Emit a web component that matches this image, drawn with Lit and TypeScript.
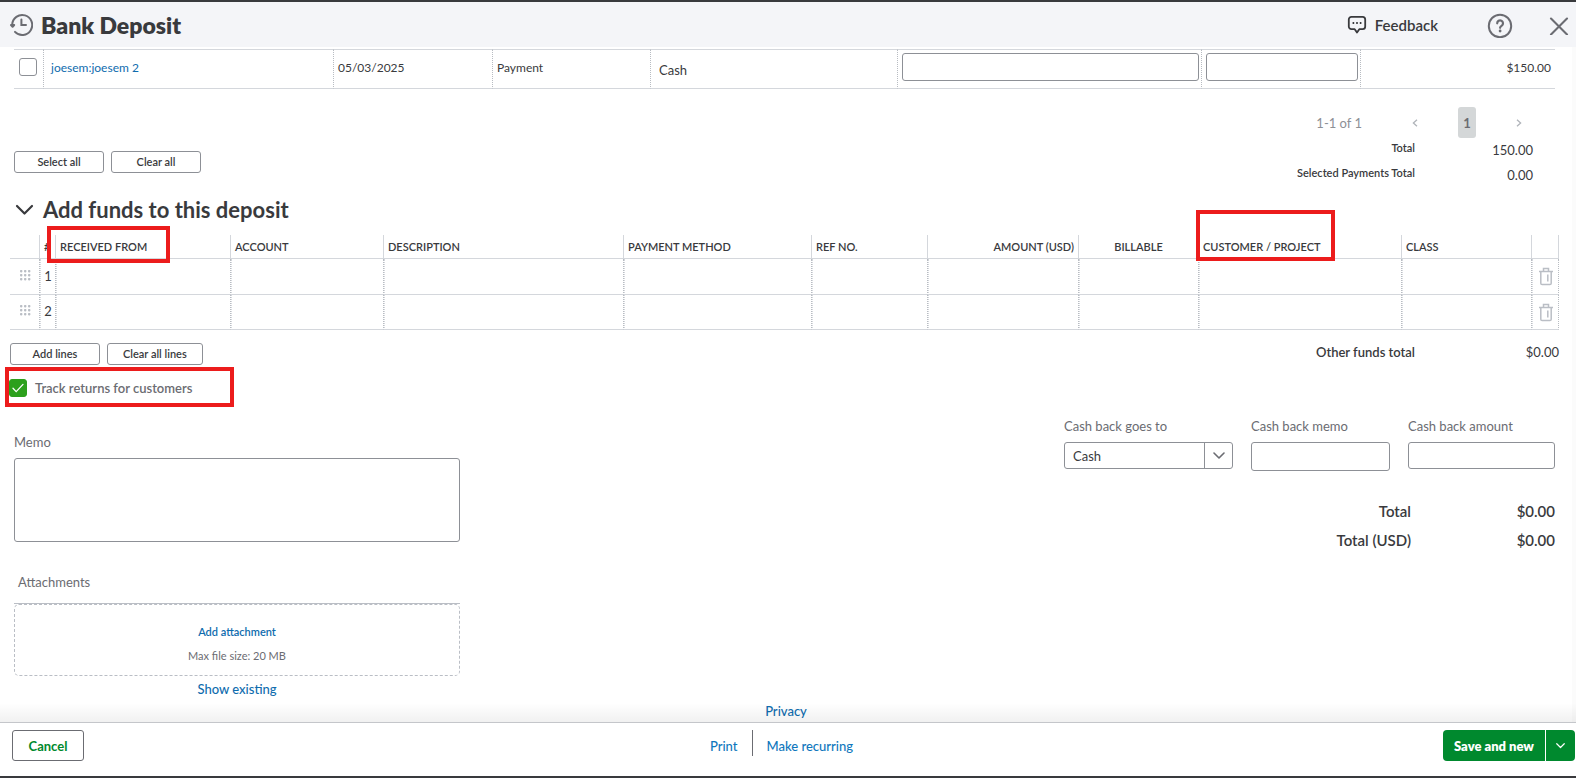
import { LitElement, html, css, svg } from "lit";
import { customElement } from "lit/decorators.js";

const chevronDown = svg`<path d="M1 1l5 5 5-5" fill="none" stroke="currentColor" stroke-width="1.6" stroke-linecap="round" stroke-linejoin="round"/>`;

@customElement("app-root")
export class AppRoot extends LitElement {
  static styles = css`
    :host {
      display: block;
      font-family: Lato, "Open Sans", sans-serif;
      font-size: 13px;
      line-height: 16px;
      color: #393a3d;
      --line: #d4d7dc;
      --edge: #8d9096;
      --muted: #6b6c72;
      --link: #0f6cae;
      --green: #00892e;
    }
    * { box-sizing: border-box; }
    button, input, select, textarea { font: inherit; color: inherit; margin: 0; }
    button { cursor: pointer; padding: 0; background: none; border: 0; }
    a { color: var(--link); text-decoration: none; font-weight: 500; }
    svg { display: block; }
    .page {
      display: flex;
      flex-direction: column;
      min-height: 100vh;
      background: #fff;
      border-top: 2px solid #393a3d;
      border-bottom: 2px solid #393a3d;
    }
    .top {
      display: flex;
      align-items: center;
      height: 45px;
      padding: 0 7px 0 9px;
      background: #f4f5f8;
      color: var(--muted);
    }
    .top h1 {
      flex: 1;
      margin: 0 0 0 8px;
      font-size: 23px;
      line-height: 28px;
      font-weight: 800;
      color: #393a3d;
    }
    .feedback {
      display: flex;
      align-items: center;
      gap: 8px;
      margin-right: 49px;
      font-size: 15px;
      font-weight: 600;
      color: #393a3d;
    }
    .help { margin-right: 36px; }
    .body { flex: 1; display: flex; flex-direction: column; padding-top: 2px; border-right: 4px solid #fbfbfb; }
    table { width: 100%; table-layout: fixed; border-collapse: separate; border-spacing: 0; }
    th, td { padding: 0; text-align: left; }
    .payments { padding: 0 17px 0 14px; }
    .payments td {
      height: 40px;
      padding: 0 4px 2px;
      border-top: 1px solid var(--line);
      border-bottom: 1px solid var(--line);
      border-right: 1px dotted #b8bcc2;
      font-size: 12px;
    }
    .payments td:last-child { border-right: 0; text-align: right; }
    .payments .pick { padding: 0 0 4px 5px; }
    .payments .payer { padding-left: 7px; }
    .payments .method { padding: 2px 8px 0; font-size: 13px; }
    .payments .entry { padding-bottom: 4px; padding-right: 2px; }
    .payments .entry + .entry { padding-left: 4px; }
    .payer a { font-weight: 400; }
    .c-pick { width: 30px; }
    .c-date { width: 159px; }
    .c-type { width: 158px; }
    .c-method { width: 247px; }
    .c-memo { width: 304px; }
    .c-ref { width: 159px; }
    .c-amount { width: 194px; }
    .tick {
      appearance: none;
      display: block;
      width: 18px;
      height: 18px;
      border: 1px solid var(--edge);
      border-radius: 3px;
      background: #fff;
    }
    .box {
      display: block;
      width: 100%;
      height: 28px;
      padding: 0 8px;
      border: 1px solid var(--edge);
      border-radius: 3px;
      background: #fff;
    }
    .pager {
      display: flex;
      align-items: center;
      justify-content: flex-end;
      margin-top: 18px;
      padding-right: 50px;
      color: var(--edge);
    }
    .pager svg { color: #b0b4ba; }
    .prev { margin: 0 40px 0 50px; }
    .next { margin-left: 40px; }
    .current {
      width: 18px;
      height: 31px;
      border-radius: 3px;
      background: #d4d7d8;
      color: var(--muted);
      font-weight: 700;
    }
    .between { display: flex; justify-content: space-between; align-items: flex-start; }
    .summary { padding: 2px 39px 0 14px; }
    .summary .buttons { margin-top: 11px; }
    .buttons { display: flex; gap: 7px; }
    .small {
      min-width: 90px;
      height: 22px;
      padding: 0 15px;
      border: 1px solid var(--edge);
      border-radius: 3px;
      background: #fff;
      font-size: 11px;
      line-height: 16px;
      font-weight: 600;
    }
    dl { display: grid; margin: 0; }
    dt, dd { margin: 0; text-align: right; }
    .sums { grid-template-columns: auto 118px; row-gap: 9px; font-size: 11px; font-weight: 600; }
    .sums dd { padding-top: 2px; margin-bottom: -2px; font-size: 13px; font-weight: 400; }
    .section {
      display: flex;
      align-items: center;
      gap: 9px;
      margin-top: 15px;
      padding-left: 15px;
    }
    .section h2 { margin: 0; font-size: 22px; line-height: 28px; font-weight: 700; }
    .funds { margin-top: 11px; padding: 0 13px 0 10px; }
    .funds th {
      position: relative;
      height: 24px;
      padding: 0 4px;
      border-right: 1px solid var(--line);
      border-bottom: 1px solid var(--line);
      font-size: 11px;
      font-weight: 600;
    }
    .funds td {
      height: 36px;
      border-bottom: 1px solid var(--line);
      border-right: 1px dotted #b8bcc2;
      vertical-align: middle;
    }
    .funds tr:last-child td { height: 35px; }
    .funds td + td { border-left: 1px dotted #d4d7dc; }
    .funds .num { padding-bottom: 2px; text-align: center; }
    .funds .right { text-align: right; }
    .funds .center { text-align: center; }
    .f-grip { width: 30px; }
    .f-num { width: 16px; }
    .f-from { width: 175px; }
    .f-account { width: 153px; }
    .f-method { width: 188px; }
    .f-ref { width: 116px; }
    .f-amount { width: 151px; }
    .f-bill { width: 120px; }
    .f-cust { width: 203px; }
    .f-class { width: 130px; }
    .f-del { width: 27px; }
    .funds .grip { padding: 0 0 3px 10px; color: #babec5; }
    .trash { display: block; margin: 0 auto; color: #babec5; }
    .mark {
      position: absolute;
      z-index: 2;
      border: 4px solid #ec1c1c;
      pointer-events: none;
    }
    .mark-from { left: -9px; top: -9px; width: 123px; height: 37px; }
    .mark-cust { left: -3px; top: -25px; width: 139px; height: 51px; }
    .mark-track { left: -4px; top: -12px; width: 229px; height: 40px; }
    .below { padding: 13px 13px 0 10px; }
    .others { display: grid; grid-template-columns: auto 144px; padding-top: 1px; }
    .others dt { font-weight: 600; }
    .track {
      position: relative;
      display: flex;
      align-items: center;
      align-self: flex-start;
      gap: 8px;
      height: 18px;
      margin: 14px 0 0 9px;
      color: var(--muted);
      font-weight: 600;
    }
    .checked { display: grid; }
    .checked > * { grid-area: 1 / 1; place-self: center; }
    .checked .tick:checked { border-color: #2ca01c; background: #2ca01c; }
    .checked svg { pointer-events: none; color: #fff; }
    .details { padding: 21px 17px 0 14px; }
    .left { display: flex; flex-direction: column; width: 446px; margin-top: 16px; color: var(--muted); }
    .left textarea {
      display: block;
      height: 84px;
      margin: 8px 0 32px;
      padding: 8px;
      border: 1px solid var(--edge);
      border-radius: 3px;
      resize: none;
    }
    .attach-title { padding: 0 4px 13px; border-bottom: 1px solid #babec5; }
    .drop {
      display: flex;
      flex-direction: column;
      align-items: center;
      gap: 8px;
      height: 72px;
      padding-top: 19px;
      border: 1px dashed #babec5;
      border-radius: 5px;
      font-size: 11px;
    }
    .drop a { font-weight: 600; }
    .existing { align-self: center; margin-top: 5px; }
    .cashback { display: flex; align-items: flex-start; gap: 18px; color: var(--muted); }
    .field { display: grid; gap: 8px; }
    .field .box { height: 27px; color: #393a3d; }
    .field .tall { height: 29px; }
    .w-goes { width: 169px; }
    .w-memo { width: 139px; }
    .w-amount { width: 147px; }
    .combo { display: grid; }
    .combo > * { grid-area: 1 / 1; }
    .combo select { appearance: none; }
    .arrow {
      justify-self: end;
      display: grid;
      place-items: center;
      width: 29px;
      border-left: 1px solid var(--edge);
      pointer-events: none;
    }
    .grand { grid-template-columns: auto 144px; row-gap: 13px; margin-top: 32px; font-size: 15px; font-weight: 600; }
    .privacy { align-self: center; margin-top: 6px; }
    .foot {
      position: relative;
      display: grid;
      grid-template-columns: 1fr auto 1fr;
      align-items: start;
      height: 54px;
      padding: 7px 1px 0 12px;
      border-top: 1px solid #d0d2d6;
      background: #fff;
    }
    .foot::before {
      content: "";
      position: absolute;
      left: 0;
      right: 0;
      bottom: 100%;
      height: 20px;
      background: linear-gradient(rgba(0, 0, 0, 0), rgba(0, 0, 0, 0.06));
      pointer-events: none;
    }
    .cancel {
      justify-self: start;
      width: 72px;
      height: 31px;
      border: 1px solid var(--muted);
      border-radius: 3px;
      color: var(--green);
      font-weight: 700;
    }
    .links { display: flex; align-items: center; margin-right: 24px; }
    .links a { padding: 8px 14px 7px; color: #0f77bd; }
    .bar { width: 1px; height: 26px; margin-bottom: 5px; background: var(--muted); }
    .save { justify-self: end; display: flex; gap: 1px; color: #fff; }
    .save button { height: 31px; background: var(--green); font-weight: 800; }
    .save .main { width: 102px; border-radius: 4px 0 0 4px; }
    .save .more { display: grid; place-items: center; width: 29px; border-radius: 0 4px 4px 0; }
  `;

  private fundRow(n: number) {
    return html`<tr>
      <td class="grip">
        <svg width="11" height="11" viewBox="0 0 11 11" fill="currentColor">
          ${[0, 4, 8].map((y) => [0, 4, 8].map((x) => svg`<rect x=${x} y=${y} width="2.4" height="2.4" rx="0.8"/>`))}
        </svg>
      </td>
      <td class="num">${n}</td>
      ${Array.from({ length: 9 }, () => html`<td></td>`)}
      <td>
        <button class="trash" aria-label="Delete line ${n}">
          <svg width="16" height="19" viewBox="0 0 16 19" fill="none" stroke="currentColor" stroke-width="1.5">
            <path d="M1 4.5h14M5.5 4V1.5h5V4M2.8 5v11.2q0 1.3 1.3 1.3h7.8q1.3 0 1.3-1.3V5M9.8 7.5v7"/>
          </svg>
        </button>
      </td>
    </tr>`;
  }

  render() {
    return html`<div class="page">
      <header class="top">
        <svg width="24" height="24" viewBox="0 0 24 24" fill="none" stroke="currentColor" stroke-width="2" stroke-linecap="round">
          <path d="M3.2 11.6A10 10 0 1 1 6 18.9"/>
          <path d="M12.4 6.6v5.4h4.6"/>
          <path d="M2 12h3.2l-1.6 1.8z" fill="currentColor" stroke-linejoin="round"/>
        </svg>
        <h1>Bank Deposit</h1>
        <button class="feedback">
          <svg width="20" height="20" viewBox="0 0 20 20" fill="none" stroke="currentColor" stroke-width="1.8" stroke-linejoin="round">
            <path d="M4.4 1.8h11.2a2.6 2.6 0 0 1 2.6 2.6v7.2a2.6 2.6 0 0 1-2.6 2.6h-3.3L10 17.6l-2.3-3.4H4.4a2.6 2.6 0 0 1-2.6-2.6V4.4a2.6 2.6 0 0 1 2.6-2.6z"/>
            <path d="M5.6 8h1.6M9.2 8h1.6M12.8 8h1.6"/>
          </svg>
          Feedback
        </button>
        <button class="help" aria-label="Help">
          <svg width="26" height="26" viewBox="0 0 26 26" fill="none" stroke="currentColor" stroke-width="2" stroke-linecap="round">
            <circle cx="13" cy="14" r="11.2"/>
            <path d="M10.2 11.3a2.9 2.9 0 1 1 4.6 2.3c-1.1.7-1.7 1.1-1.7 2.2" stroke-width="2.2"/>
            <circle cx="13.1" cy="19" r=".7" fill="currentColor" stroke-width="1.4"/>
          </svg>
        </button>
        <button aria-label="Close">
          <svg width="20" height="20" viewBox="0 0 20 20" fill="none" stroke="currentColor" stroke-width="2.1" stroke-linecap="round">
            <path d="M2 3.5l16 16M18 3.5l-16 16"/>
          </svg>
        </button>
      </header>

      <main class="body">
        <div class="payments">
          <table>
            <colgroup>
              <col class="c-pick"><col><col class="c-date"><col class="c-type"><col class="c-method"><col class="c-memo"><col class="c-ref"><col class="c-amount">
            </colgroup>
            <tbody>
              <tr>
                <td class="pick"><input class="tick" type="checkbox" aria-label="Select payment"></td>
                <td class="payer"><a href="#">joesem:joesem 2</a></td>
                <td>05/03/2025</td>
                <td>Payment</td>
                <td class="method">Cash</td>
                <td class="entry"><input class="box" type="text" aria-label="Payment memo"></td>
                <td class="entry"><input class="box" type="text" aria-label="Payment reference"></td>
                <td>$150.00</td>
              </tr>
            </tbody>
          </table>
        </div>

        <nav class="pager" aria-label="Pages">
          <span>1-1 of 1</span>
          <button class="prev" aria-label="Previous page">
            <svg width="6" height="8" viewBox="0 0 6 8" fill="none" stroke="currentColor" stroke-width="1.3"><path d="M5 .8L1.4 4 5 7.2"/></svg>
          </button>
          <button class="current">1</button>
          <button class="next" aria-label="Next page">
            <svg width="6" height="8" viewBox="0 0 6 8" fill="none" stroke="currentColor" stroke-width="1.3"><path d="M1 .8L4.6 4 1 7.2"/></svg>
          </button>
        </nav>

        <div class="between summary">
          <div class="buttons">
            <button class="small">Select all</button>
            <button class="small">Clear all</button>
          </div>
          <dl class="sums">
            <dt>Total</dt><dd>150.00</dd>
            <dt>Selected Payments Total</dt><dd>0.00</dd>
          </dl>
        </div>

        <div class="section">
          <svg width="19" height="12" viewBox="0 0 19 12" fill="none" stroke="currentColor" stroke-width="2.2" stroke-linecap="round" stroke-linejoin="round"><path d="M2 2l7.5 7.5L17 2"/></svg>
          <h2>Add funds to this deposit</h2>
        </div>

        <div class="funds">
          <table>
            <colgroup>
              <col class="f-grip"><col class="f-num"><col class="f-from"><col class="f-account"><col><col class="f-method"><col class="f-ref"><col class="f-amount"><col class="f-bill"><col class="f-cust"><col class="f-class"><col class="f-del">
            </colgroup>
            <thead>
              <tr>
                <th></th>
                <th>#</th>
                <th>RECEIVED FROM<span class="mark mark-from"></span></th>
                <th>ACCOUNT</th>
                <th>DESCRIPTION</th>
                <th>PAYMENT METHOD</th>
                <th>REF NO.</th>
                <th class="right">AMOUNT (USD)</th>
                <th class="center">BILLABLE</th>
                <th>CUSTOMER / PROJECT<span class="mark mark-cust"></span></th>
                <th>CLASS</th>
                <th></th>
              </tr>
            </thead>
            <tbody>${this.fundRow(1)}${this.fundRow(2)}</tbody>
          </table>
        </div>

        <div class="between below">
          <div class="buttons">
            <button class="small">Add lines</button>
            <button class="small">Clear all lines</button>
          </div>
          <dl class="others"><dt>Other funds total</dt><dd>$0.00</dd></dl>
        </div>

        <label class="track">
          <span class="checked">
            <input class="tick" type="checkbox" checked>
            <svg width="12" height="10" viewBox="0 0 12 10" fill="none" stroke="currentColor" stroke-width="1.3" stroke-linecap="round"><path d="M1 5.2l3.2 3.4L11 1.4"/></svg>
          </span>
          Track returns for customers
          <span class="mark mark-track"></span>
        </label>

        <div class="between details">
          <div class="left">
            <label for="memo">Memo</label>
            <textarea id="memo"></textarea>
            <div class="attach-title">Attachments</div>
            <div class="drop">
              <a href="#">Add attachment</a>
              <span>Max file size: 20 MB</span>
            </div>
            <a class="existing" href="#">Show existing</a>
          </div>
          <div>
            <div class="cashback">
              <div class="field w-goes">
                <label for="goes">Cash back goes to</label>
                <div class="combo">
                  <select class="box" id="goes"><option>Cash</option></select>
                  <span class="arrow"><svg width="12" height="8" viewBox="0 0 12 8">${chevronDown}</svg></span>
                </div>
              </div>
              <div class="field w-memo">
                <label for="cbmemo">Cash back memo</label>
                <input class="box tall" id="cbmemo" type="text">
              </div>
              <div class="field w-amount">
                <label for="cbamount">Cash back amount</label>
                <input class="box" id="cbamount" type="text">
              </div>
            </div>
            <dl class="grand">
              <dt>Total</dt><dd>$0.00</dd>
              <dt>Total (USD)</dt><dd>$0.00</dd>
            </dl>
          </div>
        </div>

        <a class="privacy" href="#">Privacy</a>
      </main>

      <footer class="foot">
        <button class="cancel">Cancel</button>
        <div class="links"><a href="#">Print</a><span class="bar"></span><a href="#">Make recurring</a></div>
        <div class="save">
          <button class="main">Save and new</button>
          <button class="more" aria-label="More save options"><svg width="9" height="6" viewBox="0 0 12 8">${chevronDown}</svg></button>
        </div>
      </footer>
    </div>`;
  }
}
